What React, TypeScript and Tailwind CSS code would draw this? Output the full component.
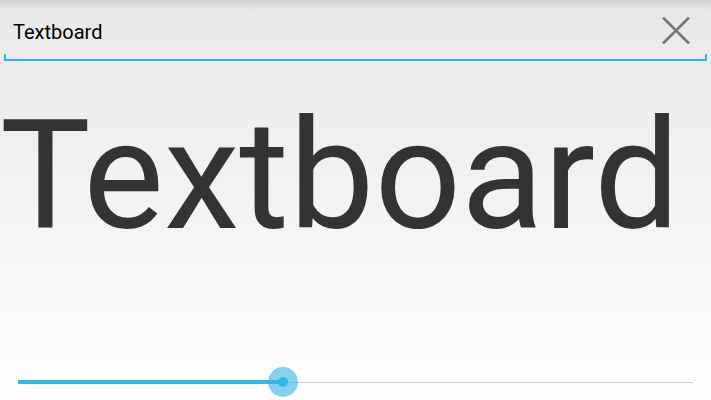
import { useState } from "react";

export default function App() {
  const [value] = useState(0.393);

  return (
    <div
      className="relative flex w-[711px] h-[400px] flex-col overflow-hidden bg-gradient-to-b from-[#e8e8e8] to-[#fefefe] text-[#333333]"
      style={{ fontFamily: "Roboto, 'Noto Sans', sans-serif" }}
    >
      {/* status bar shadow */}
      <div className="absolute inset-x-0 top-0 h-[10px] bg-gradient-to-b from-[#cfcfcf] to-transparent" />

      {/* search field */}
      <div className="flex h-[61px] px-[4px]">
        <div className="relative flex flex-1 items-start justify-between border-b-2 border-[#33b5e5]">
          <span className="pl-[9px] pt-[22px] text-[20px] leading-none text-black">Textboard</span>
          <span className="absolute left-0 bottom-0 h-[5px] w-[2px] bg-[#33b5e5]" />
          <span className="absolute right-0 bottom-0 h-[5px] w-[2px] bg-[#33b5e5]" />
          <div className="pr-[17px] pt-[17px]">
            <svg width="28" height="27" viewBox="0 0 28 27" fill="none" stroke="#777777" strokeWidth="2.6">
              <path d="M1 0.5 L27 26.5 M27 0.5 L1 26.5" />
            </svg>
          </div>
        </div>
      </div>

      {/* big text */}
      <div className="pt-[39px] text-[152px] leading-none text-[#333333] whitespace-nowrap">
        Textboard
      </div>

      {/* slider */}
      <div className="mt-auto mb-[3px] flex h-[30px] items-center px-[18px]">
        <div className="flex flex-1 items-center">
          <div className="h-[4px] bg-[#33b5e5]" style={{ width: `${value * 100}%` }} />
          <div className="-mx-[15px] z-10 flex h-[30px] w-[30px] shrink-0 items-center justify-center rounded-full bg-[#33b5e5]/60">
            <div className="h-[10px] w-[10px] rounded-full bg-[#33b5e5]" />
          </div>
          <div className="h-[1px] flex-1 bg-[#cccccc]" />
        </div>
      </div>
    </div>
  );
}
